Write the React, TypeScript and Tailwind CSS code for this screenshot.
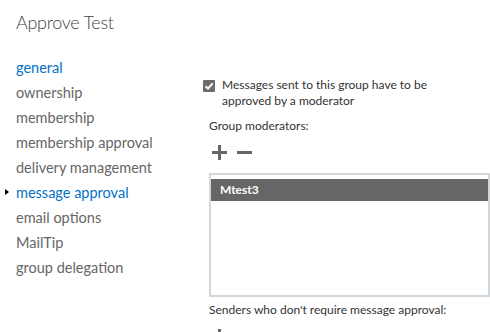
import { useState } from 'react';

const navItems = [
  'general',
  'ownership',
  'membership',
  'membership approval',
  'delivery management',
  'message approval',
  'email options',
  'MailTip',
  'group delegation',
];

function PlusIcon() {
  return (
    <svg width="15" height="15" viewBox="0 0 15 15">
      <rect x="6" y="0" width="3" height="15" fill="#666" />
      <rect x="0" y="6" width="15" height="3" fill="#666" />
    </svg>
  );
}

function MinusIcon() {
  return (
    <svg width="15" height="15" viewBox="0 0 15 15">
      <rect x="0" y="6" width="15" height="3" fill="#666" />
    </svg>
  );
}

function App() {
  const [selected, setSelected] = useState('message approval');
  const [approve, setApprove] = useState(true);

  return (
    <div className="w-[490px] h-[332px] overflow-hidden bg-white font-['Lato',sans-serif] text-[#333]">
      {/* Title */}
      <h1 className="pt-[10px] pl-[16px] text-[18px] leading-[24px] tracking-[-0.3px] font-light text-[#444]">
        Approve Test
      </h1>

      <div className="flex mt-[21px]">
        {/* Nav */}
        <ul className="w-[203px] shrink-0 pl-[16px]">
          {navItems.map((item) => {
            const active = item === selected;
            const blue = active || item === 'general';
            return (
              <li
                key={item}
                onClick={() => setSelected(item)}
                className={`relative text-[14.5px] leading-[25px] cursor-pointer ${blue ? 'text-[#0072c6]' : 'text-[#666]'}`}
              >
                {active && (
                  <span className="absolute left-[-11px] top-[9px] w-0 h-0 border-y-[3.5px] border-y-transparent border-l-[4px] border-l-black" />
                )}
                {item}
              </li>
            );
          })}
        </ul>

        {/* Content */}
        <div className="flex-1 pt-[22px]">
          <div className="flex items-start gap-[7px] text-[12px] leading-[16px]">
            <span
              onClick={() => setApprove(!approve)}
              className="mt-[3px] w-[12px] h-[12px] shrink-0 bg-[#6b6b6b] rounded-[1px] flex items-center justify-center cursor-pointer"
            >
              {approve && (
                <svg width="10" height="10" viewBox="0 0 10 10">
                  <path d="M1.5 5.2 L4 7.6 L8.6 2.4" stroke="#fff" strokeWidth="2" fill="none" />
                </svg>
              )}
            </span>
            <div>
              <div>Messages sent to this group have to be</div>
              <div>approved by a moderator</div>
            </div>
          </div>

          <div className="pl-[6px]">
            <div className="mt-[9px] text-[12px] leading-[16px]">Group moderators:</div>

            <div className="flex items-center gap-[10px] mt-[11px] pl-[3px] h-[14px]">
              <PlusIcon />
              <MinusIcon />
            </div>

            <div className="mt-[14px] w-[281px] h-[124px] border-2 border-[#d4d7da] pt-[4px]">
              <div className="h-[22px] bg-[#666] text-white font-bold text-[12px] leading-[22px] pl-[9px]">
                Mtest3
              </div>
            </div>

            <div className="mt-[5px] text-[12px] leading-[16px]">
              Senders who don't require message approval:
            </div>

            <div className="mt-[11px] pl-[3px]">
              <PlusIcon />
            </div>
          </div>
        </div>
      </div>
    </div>
  );
}

export default App;
